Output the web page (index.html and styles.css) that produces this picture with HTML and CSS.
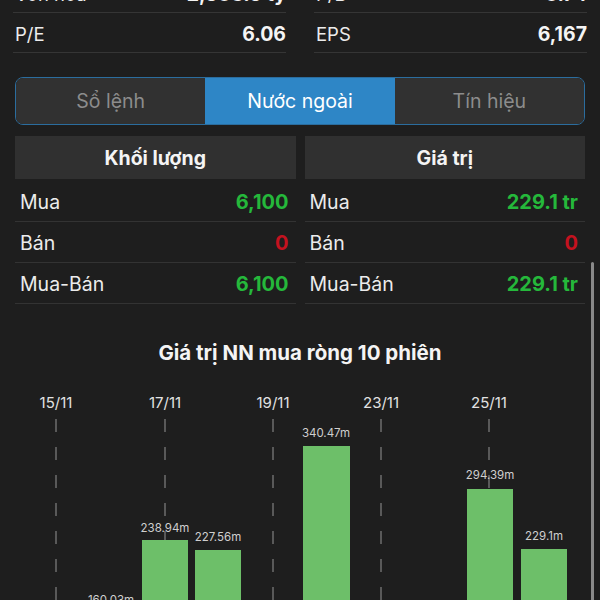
FILE: index.html
```html
<!DOCTYPE html>
<html>
<head>
    <title>Nước ngoài</title>
    <link rel="stylesheet" href="styles.css">
</head>
<body>
    <div class="screen">
        <div class="stats">
            <div class="stat-col">
                <div class="stat-row"><span>Vốn hóa</span><b>2,503.9 tỷ</b></div>
                <div class="stat-row"><span>P/E</span><b>6.06</b></div>
            </div>
            <div class="stat-col">
                <div class="stat-row"><span>P/B</span><b>0.74</b></div>
                <div class="stat-row"><span>EPS</span><b>6,167</b></div>
            </div>
        </div>

        <div class="tabs">
            <div class="tab">Sổ lệnh</div>
            <div class="tab active">Nước ngoài</div>
            <div class="tab">Tín hiệu</div>
        </div>

        <div class="foreign">
            <div class="ftable">
                <div class="fhead">Khối lượng</div>
                <div class="frow"><span>Mua</span><b class="up">6,100</b></div>
                <div class="frow"><span>Bán</span><b class="down">0</b></div>
                <div class="frow"><span>Mua-Bán</span><b class="up">6,100</b></div>
            </div>
            <div class="ftable">
                <div class="fhead">Giá trị</div>
                <div class="frow"><span>Mua</span><b class="up">229.1 tr</b></div>
                <div class="frow"><span>Bán</span><b class="down">0</b></div>
                <div class="frow"><span>Mua-Bán</span><b class="up">229.1 tr</b></div>
            </div>
        </div>

        <div class="chart">
            <h2 class="chart-title">Giá trị NN mua ròng 10 phiên</h2>
            <svg class="chart-svg" width="600" height="240" viewBox="0 0 600 240">
                <g class="grid">
                    <line x1="56" y1="37" x2="56" y2="240"/>
                    <line x1="165" y1="37" x2="165" y2="240"/>
                    <line x1="273" y1="37" x2="273" y2="240"/>
                    <line x1="381" y1="37" x2="381" y2="240"/>
                    <line x1="489" y1="37" x2="489" y2="240"/>
                </g>
                <g class="dates">
                    <text x="56" y="22">15/11</text>
                    <text x="165" y="22">17/11</text>
                    <text x="273" y="22">19/11</text>
                    <text x="381" y="22">23/11</text>
                    <text x="489" y="22">25/11</text>
                </g>
                <g class="bars">
                    <rect x="88" y="231" width="46" height="30"/>
                    <rect x="142" y="158" width="46" height="90"/>
                    <rect x="195" y="168" width="46" height="80"/>
                    <rect x="303" y="64" width="47" height="180"/>
                    <rect x="467" y="107" width="46" height="140"/>
                    <rect x="521" y="167" width="46" height="80"/>
                </g>
                <g class="values">
                    <text x="111" y="219">160.03m</text>
                    <text x="165" y="147">238.94m</text>
                    <text x="218" y="156">227.56m</text>
                    <text x="326" y="52">340.47m</text>
                    <text x="490" y="94">294.39m</text>
                    <text x="544" y="155">229.1m</text>
                </g>
            </svg>
        </div>
    </div>
    <div class="scrollbar"></div>
</body>
</html>
```

FILE: styles.css
```css
* {
    box-sizing: border-box;
}
html, body {
    margin: 0;
    height: 600px;
    overflow: hidden;
    background: #1e1e1e;
}
body {
    font-family: Inter, "Noto Sans", sans-serif;
    color: #ececec;
    position: relative;
}
.screen {
    padding: 0 15px;
}
.stats {
    display: grid;
    grid-template-columns: 1fr 1fr;
    gap: 28px;
    margin: -27px -2px 0 -2px;
}
.stat-row {
    height: 40px;
    display: flex;
    align-items: center;
    justify-content: space-between;
    border-bottom: 1px solid #353535;
    padding: 3px 0 0 2px;
    font-size: 18.5px;
}
.stat-row b {
    font-size: 19.5px;
    font-weight: 700;
    color: #f4f4f4;
}
.tabs {
    display: flex;
    margin-top: 24px;
    height: 48px;
    border: 1.5px solid #2b6d9e;
    border-radius: 8px;
    overflow: hidden;
}
.tab {
    flex: 1;
    display: flex;
    align-items: center;
    justify-content: center;
    background: #313131;
    color: #8c8c8c;
    font-size: 19.5px;
}
.tab.active {
    background: #2e86c6;
    color: #ffffff;
}
.foreign {
    display: grid;
    grid-template-columns: 1fr 1fr;
    gap: 9px;
    margin-top: 11px;
}
.fhead {
    height: 43px;
    margin-bottom: 2px;
    display: flex;
    align-items: center;
    justify-content: center;
    background: #303030;
    font-size: 19.5px;
    font-weight: 700;
    color: #f4f4f4;
}
.frow {
    height: 41px;
    display: flex;
    align-items: center;
    justify-content: space-between;
    border-bottom: 1px solid #333333;
    padding: 2px 7px 0 5px;
    font-size: 19.5px;
}
.frow b {
    font-size: 20px;
    font-weight: 700;
}
.up {
    color: #25b83b;
}
.down {
    color: #c4121f;
}
.chart {
    margin: 0 -15px;
}
.chart-title {
    margin: 36px 0 0 0;
    height: 26px;
    line-height: 26px;
    text-align: center;
    font-size: 20.5px;
    font-weight: 700;
    color: #f4f4f4;
}
.chart-svg {
    display: block;
    margin-top: 16px;
}
.grid line {
    stroke: #6e6e6e;
    stroke-width: 1.5;
    stroke-dasharray: 13 15;
}
.dates text {
    fill: #e2e2e2;
    font-size: 15px;
    text-anchor: middle;
    dominant-baseline: middle;
}
.bars rect {
    fill: #6dbf69;
}
.values text {
    fill: #cfcfcf;
    font-size: 11.5px;
    text-anchor: middle;
    dominant-baseline: middle;
}
.scrollbar {
    position: absolute;
    left: 591px;
    top: 262px;
    width: 3px;
    height: 345px;
    border-radius: 2px;
    background: #8a8a8a;
}
```
